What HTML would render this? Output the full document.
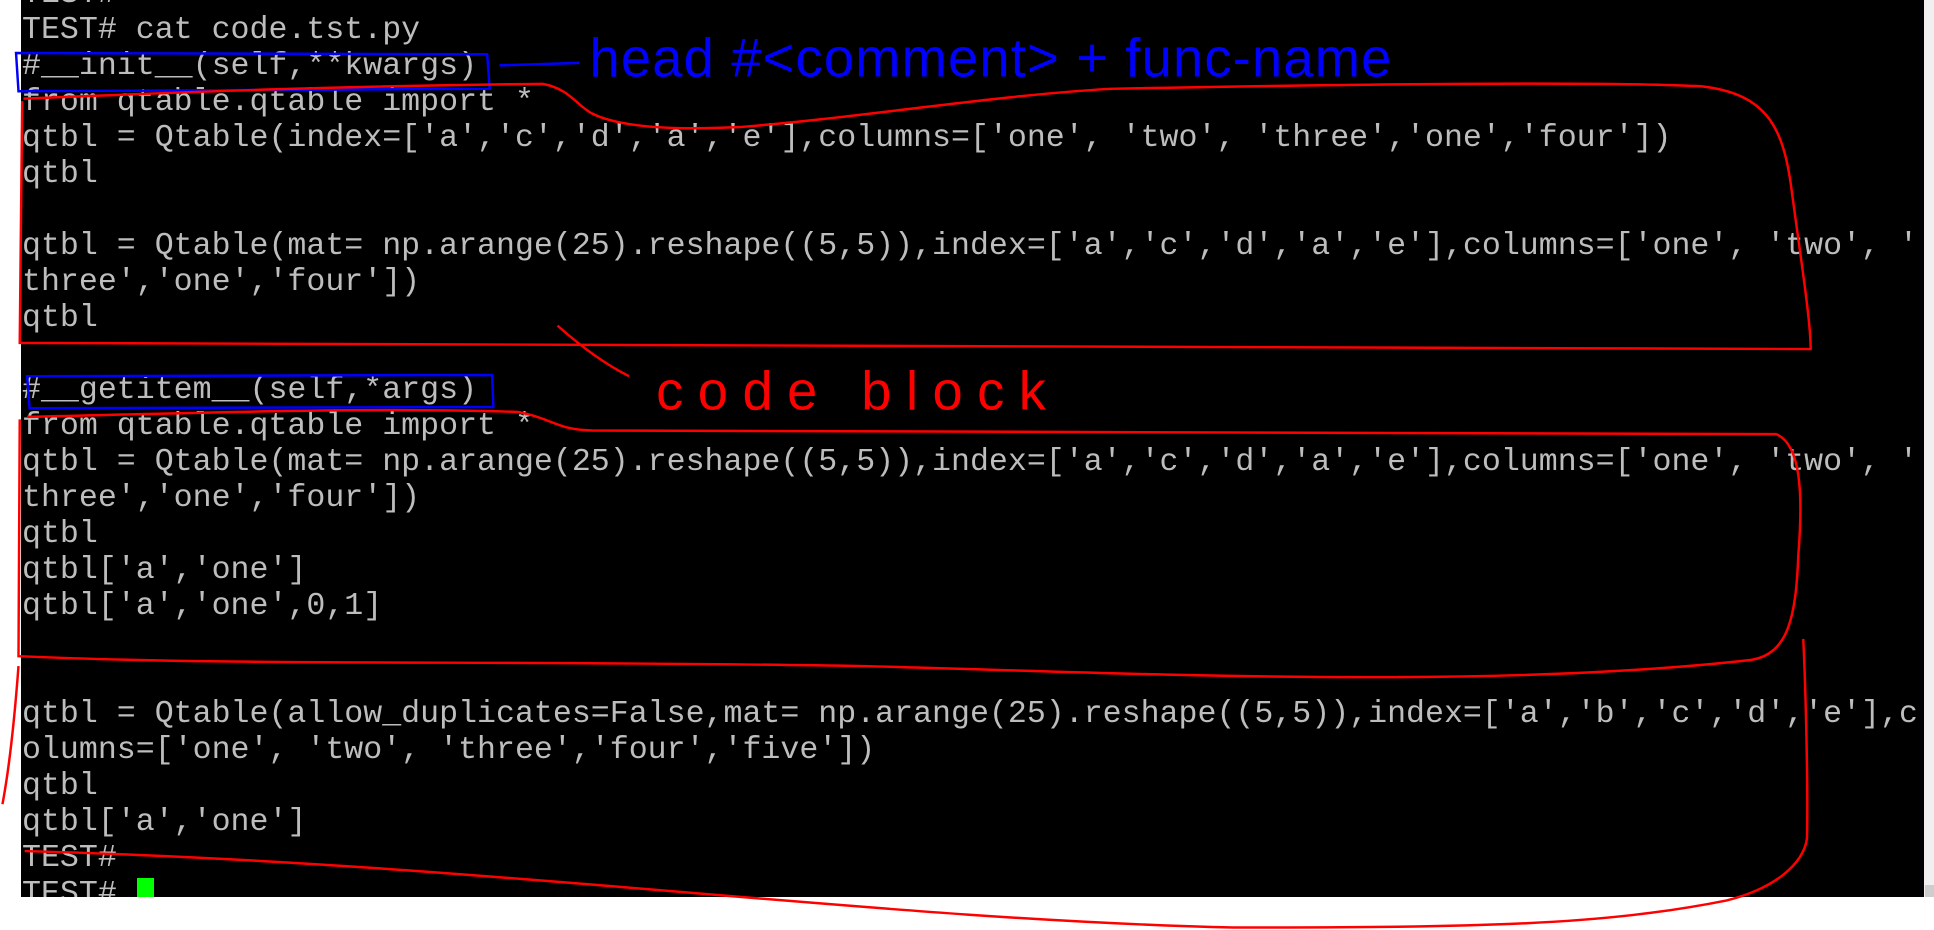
<!DOCTYPE html>
<html><head><meta charset="utf-8"><style>
html,body{margin:0;padding:0;width:1934px;height:930px;overflow:hidden;background:#fff;position:relative}
#term{position:absolute;left:21px;top:0;width:1903px;height:897px;background:#000;overflow:hidden}
#sb{position:absolute;left:1924px;top:0;width:10px;height:897px;background:#f0f0f0}
#thumb{position:absolute;left:1925px;top:885px;width:9px;height:12px;background:#cdcdcd}
pre{position:absolute;left:1px;top:-23px;margin:0;font-family:"Liberation Mono",monospace;font-size:31.6px;line-height:36px;color:#bdbdbd;white-space:pre}
#cur{position:absolute;left:137px;top:878px;width:17px;height:19px;background:#00ff00}
svg{position:absolute;left:0;top:0}
</style></head><body>
<div id="term"><pre>TEST#
TEST# cat code.tst.py
#__init__(self,**kwargs)
from qtable.qtable import *
qtbl = Qtable(index=['a','c','d','a','e'],columns=['one', 'two', 'three','one','four'])
qtbl

qtbl = Qtable(mat= np.arange(25).reshape((5,5)),index=['a','c','d','a','e'],columns=['one', 'two', '
three','one','four'])
qtbl

#__getitem__(self,*args)
from qtable.qtable import *
qtbl = Qtable(mat= np.arange(25).reshape((5,5)),index=['a','c','d','a','e'],columns=['one', 'two', '
three','one','four'])
qtbl
qtbl['a','one']
qtbl['a','one',0,1]


qtbl = Qtable(allow_duplicates=False,mat= np.arange(25).reshape((5,5)),index=['a','b','c','d','e'],c
olumns=['one', 'two', 'three','four','five'])
qtbl
qtbl['a','one']
TEST#
TEST# </pre></div>
<div id="cur"></div>
<div id="sb"></div><div id="thumb"></div>
<svg width="1934" height="930" viewBox="0 0 1568 754" preserveAspectRatio="none">
<g fill="none" stroke="#0000ff" stroke-width="2">
<path d="M13,43 L395,44 L397,72 L15,74 Z"/>
<path d="M405,53 L470,51"/>
<path d="M22,305 L399,304 L400,330 L24,331 Z"/>
</g>
<text x="478" y="62" font-family="Liberation Sans,sans-serif" font-size="44" fill="#0000ff" textLength="650">head #&lt;comment&gt; + func-name</text>
<g fill="none" stroke="#ff0000" stroke-width="2">
<path d="M19,80 C120,76 250,70 440,68 C462,72 468,86 480,92 C500,102 540,106 600,103 C700,95 800,78 900,72 C1100,68 1300,66 1380,70 C1430,76 1445,100 1452,150 C1460,210 1468,260 1468,283 L16,278 L18,82"/>
<path d="M452,264 C470,280 490,295 510,305"/>
<path d="M22,338 C150,335 300,330 420,334 C450,340 450,348 480,349 L1440,352 C1460,360 1462,400 1458,450 C1456,500 1450,530 1420,535 C1200,560 900,545 700,540 C400,535 200,540 15,532 L16,340"/>
<path d="M15,540 C12,580 8,620 2,652"/>
<path d="M1462,518 C1464,560 1466,640 1465,680 C1462,700 1440,720 1400,730 C1300,750 1200,752 1000,752 C700,745 400,700 20,690"/>
</g>
<text x="532" y="332" font-family="Liberation Sans,sans-serif" font-size="44" fill="#ff0000" textLength="316">code block</text>
</svg>
</body></html>
